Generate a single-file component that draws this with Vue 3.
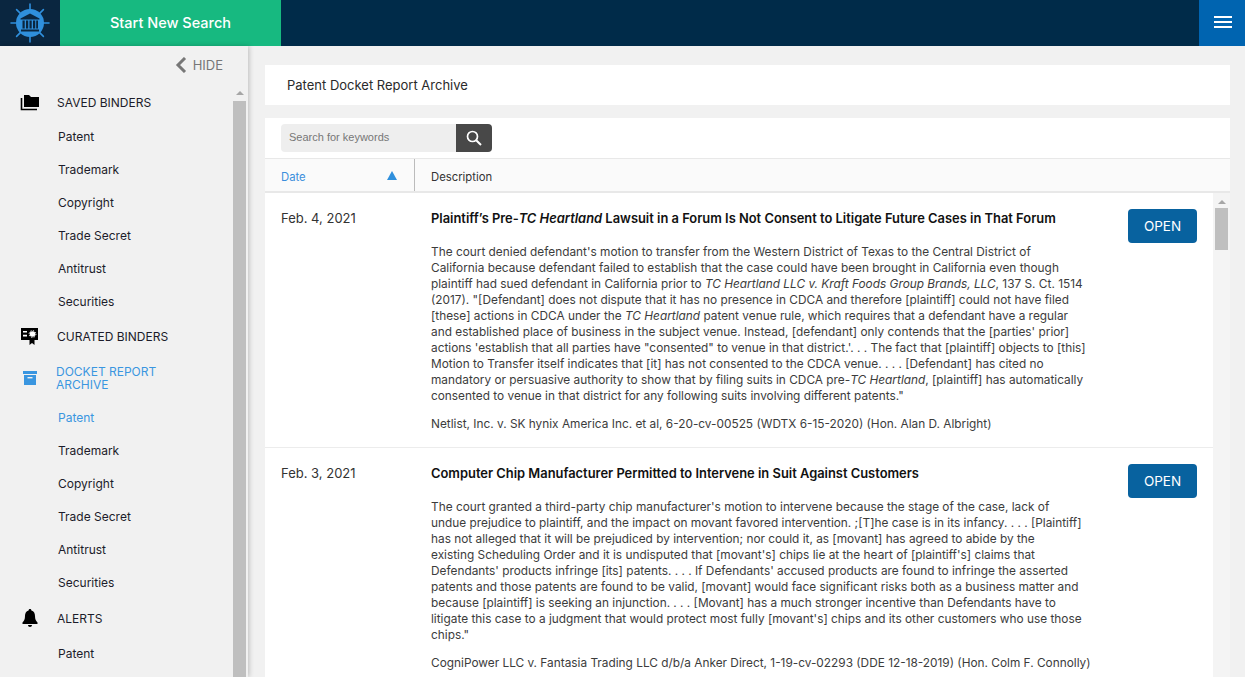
<template>
  <div class="app">
    <header class="topbar">
      <div class="logo">
        <svg width="40" height="40" viewBox="0 0 40 40">
          <g stroke="#2f8fdc" stroke-width="1.6" stroke-linecap="round">
            <path d="M20 1v38M1 20h38M6.6 6.6l26.8 26.800M33.400 6.600L6.600 33.400" />
          </g>
          <circle cx="20" cy="20" r="14" fill="#2f8fdc" />
          <path d="M20 10.500L29.500 15.500V16.500H10.500V15.500Z" fill="#0a2640" />
          <path d="M12.500 17.500h2.200v8h-2.200zM16 17.500h2.200v8H16zM19.500 17.500h2.200v8h-2.200zM23 17.500h2.200v8H23zM26.200 17.500h1.800v8h-1.800zM11 26.500h18v2H11z" fill="#0a2640" />
        </svg>
      </div>
      <button class="new-search">Start New Search</button>
      <div class="spacer"></div>
      <button class="menu-btn" aria-label="Menu"><span></span><span></span><span></span></button>
    </header>

    <div class="body-row">
      <aside class="sidebar">
        <div class="hide-row">
          <svg width="12" height="16" viewBox="0 0 12 16"><path d="M10 1L3 8l7 7" fill="none" stroke="#777" stroke-width="3" /></svg>
          <span>HIDE</span>
        </div>
        <div class="nav-wrap">
          <nav class="nav">
            <template v-for="group in groups" :key="group.name">
              <div class="group" :class="group.kind">
                <span class="group-icon">
                  <svg v-if="group.icon === 'folder'" width="20" height="17" viewBox="0 0 20 17">
                    <path d="M4 1h5l2 2h8v10H4z" fill="#000" />
                    <path d="M1.500 4v11.500H17" fill="none" stroke="#000" stroke-width="1.600" />
                  </svg>
                  <svg v-else-if="group.icon === 'cert'" width="19" height="19" viewBox="0 0 19 19">
                    <path d="M1 1h17v12h-3.500v5l-2.500-2-2.500 2v-5H1z" fill="#000" />
                    <path d="M3 4h4v1.600H3zM3 7.800h4v1.600H3z" fill="#fff" />
                    <circle cx="12.500" cy="7" r="2.800" fill="#fff" />
                    <circle cx="12.500" cy="7" r="3.400" fill="none" stroke="#fff" stroke-width="1" stroke-dasharray="1.300 1.370" />
                  </svg>
                  <svg v-else-if="group.icon === 'archive'" width="14" height="14" viewBox="0 0 14 14">
                    <path d="M0 0h14v3H0z" fill="#3a96e0" />
                    <path d="M1 4h12v10H1z" fill="#3a96e0" />
                    <path d="M4.500 6h5v1.400h-5z" fill="#f1f1f1" />
                  </svg>
                  <svg v-else width="16" height="18" viewBox="0 0 16 18">
                    <path d="M8 0c1 0 1.400.7 1.400 1.500C12 2.200 13 4.500 13 7c0 3.500 1 5 2.500 6.500V15H.5v-1.500C2 12 3 10.500 3 7c0-2.500 1-4.800 3.600-5.500C6.600.7 7 0 8 0z" fill="#000" />
                    <path d="M6 16h4c0 1-.9 2-2 2s-2-1-2-2z" fill="#000" />
                  </svg>
                </span>
                <span class="group-name" v-html="group.name"></span>
              </div>
              <a
                v-for="(item, i) in group.items"
                :key="item"
                class="nav-link"
                :class="{ active: group.kind === 'archive' && i === 0 }"
              >{{ item }}</a>
            </template>
          </nav>
          <div class="side-scroll">
            <i class="arrow"></i>
            <div class="thumb"></div>
          </div>
        </div>
      </aside>

      <main class="main">
        <div class="title-card">Patent Docket Report Archive</div>
        <section class="panel">
          <div class="search-row">
            <div class="search">
              <span class="search-input">Search for keywords</span>
              <button class="search-btn" aria-label="Search">
                <svg width="16" height="16" viewBox="0 0 16 16">
                  <circle cx="6.500" cy="6.500" r="5" fill="none" stroke="#fff" stroke-width="1.700" />
                  <path d="M10.200 10.200L15 15" stroke="#fff" stroke-width="2" />
                </svg>
              </button>
            </div>
          </div>
          <div class="table-head">
            <div class="th-date">Date <i class="sort"></i></div>
            <div class="th-desc">Description</div>
          </div>
          <div class="table-body">
            <div class="rows">
              <article v-for="row in rows" :key="row.date" class="row">
                <div class="date">{{ row.date }}</div>
                <div class="content">
                  <h3 class="row-title" v-html="row.title"></h3>
                  <p class="summary" v-html="row.summary"></p>
                  <p class="cite">{{ row.cite }}</p>
                </div>
                <button class="open">OPEN</button>
              </article>
            </div>
            <div class="main-scroll">
              <i class="arrow"></i>
              <div class="thumb"></div>
            </div>
          </div>
        </section>
      </main>
    </div>
  </div>
</template>

<script setup>
const kinds = ['Patent', 'Trademark', 'Copyright', 'Trade Secret', 'Antitrust', 'Securities']

const groups = [
  { name: 'SAVED BINDERS', icon: 'folder', items: kinds },
  { name: 'CURATED BINDERS', icon: 'cert', items: [], kind: 'curated' },
  { name: 'DOCKET REPORT<br>ARCHIVE', icon: 'archive', items: kinds, kind: 'archive' },
  { name: 'ALERTS', icon: 'bell', items: ['Patent'], kind: 'alerts' },
]

const rows = [
  {
    date: 'Feb. 4, 2021',
    title: 'Plaintiff’s Pre-<em>TC Heartland</em> Lawsuit in a Forum Is Not Consent to Litigate Future Cases in That Forum',
    summary: `The court denied defendant's motion to transfer from the Western District of Texas to the Central District of<br>
California because defendant failed to establish that the case could have been brought in California even though<br>
plaintiff had sued defendant in California prior to <em>TC Heartland LLC v. Kraft Foods Group Brands, LLC</em>, 137 S. Ct. 1514<br>
(2017). "[Defendant] does not dispute that it has no presence in CDCA and therefore [plaintiff] could not have filed<br>
[these] actions in CDCA under the <em>TC Heartland</em> patent venue rule, which requires that a defendant have a regular<br>
and established place of business in the subject venue. Instead, [defendant] only contends that the [parties' prior]<br>
actions 'establish that all parties have "consented" to venue in that district.'. . . The fact that [plaintiff] objects to [this]<br>
Motion to Transfer itself indicates that [it] has not consented to the CDCA venue. . . . [Defendant] has cited no<br>
mandatory or persuasive authority to show that by filing suits in CDCA pre-<em>TC Heartland</em>, [plaintiff] has automatically<br>
consented to venue in that district for any following suits involving different patents."`,
    cite: 'Netlist, Inc. v. SK hynix America Inc. et al, 6-20-cv-00525 (WDTX 6-15-2020) (Hon. Alan D. Albright)',
  },
  {
    date: 'Feb. 3, 2021',
    title: 'Computer Chip Manufacturer Permitted to Intervene in Suit Against Customers',
    summary: `The court granted a third-party chip manufacturer's motion to intervene because the stage of the case, lack of<br>
undue prejudice to plaintiff, and the impact on movant favored intervention. ;[T]he case is in its infancy. . . . [Plaintiff]<br>
has not alleged that it will be prejudiced by intervention; nor could it, as [movant] has agreed to abide by the<br>
existing Scheduling Order and it is undisputed that [movant's] chips lie at the heart of [plaintiff's] claims that<br>
Defendants' products infringe [its] patents. . . . If Defendants' accused products are found to infringe the asserted<br>
patents and those patents are found to be valid, [movant] would face significant risks both as a business matter and<br>
because [plaintiff] is seeking an injunction. . . . [Movant] has a much stronger incentive than Defendants have to<br>
litigate this case to a judgment that would protect most fully [movant's] chips and its other customers who use those<br>
chips."`,
    cite: 'CogniPower LLC v. Fantasia Trading LLC d/b/a Anker Direct, 1-19-cv-02293 (DDE 12-18-2019) (Hon. Colm F. Connolly)',
  },
]
</script>

<style>
html,
body {
  margin: 0;
  height: 100%;
  overflow: hidden;
}
</style>

<style scoped>
.app {
  width: 1245px;
  height: 677px;
  display: flex;
  flex-direction: column;
  overflow: hidden;
  background: #f1f1f1;
  font-family: Inter, "Liberation Sans", sans-serif;
  color: #222;
}

.topbar {
  height: 46px;
  flex: none;
  display: flex;
  background: #002b49;
}

.logo {
  width: 60px;
  background: #0a2640;
  display: flex;
  align-items: center;
  justify-content: center;
}

.new-search {
  width: 221px;
  border: 0;
  padding: 0 0 2px;
  background: #17b980;
  color: #fff;
  font: 500 14.500px Inter, sans-serif;
}

.spacer {
  flex: 1;
}

.menu-btn {
  width: 46px;
  border: 0;
  background: #0064b0;
  display: flex;
  flex-direction: column;
  align-items: center;
  justify-content: center;
  gap: 3px;
  padding: 0 0 2px 2px;
}

.menu-btn span {
  width: 18px;
  height: 2px;
  background: #fff;
}

.body-row {
  flex: 1;
  min-height: 0;
  display: flex;
}

.sidebar {
  width: 248px;
  flex: none;
  display: flex;
  flex-direction: column;
  background: #f1f1f1;
  box-shadow: 1px 0 5px rgba(0, 0, 0, 0.22);
}

.hide-row {
  height: 40px;
  flex: none;
  display: flex;
  align-items: center;
  justify-content: flex-end;
  gap: 6px;
  padding-right: 25px;
  padding-bottom: 2px;
  box-sizing: border-box;
  font-size: 13px;
  color: #777;
}

.nav-wrap {
  flex: 1;
  min-height: 0;
  display: flex;
}

.nav {
  flex: 1;
  overflow: hidden;
}

.group {
  height: 33px;
  box-sizing: border-box;
  display: flex;
  align-items: center;
  font-size: 12px;
  color: #1c1c2a;
}

.group.curated {
  height: 36px;
  padding-top: 2px;
}

.group.archive {
  height: 47px;
  padding-top: 2px;
  color: #3a96e0;
  line-height: 13px;
}

.group.alerts {
  height: 38px;
  padding-top: 2px;
}

.group-icon {
  width: 57px;
  flex: none;
  display: flex;
  justify-content: center;
  box-sizing: border-box;
  padding-left: 2px;
}

.group.archive .group-name {
  margin-left: -1px;
}

.nav-link {
  display: flex;
  align-items: center;
  box-sizing: border-box;
  height: 33px;
  padding: 2px 0 0 58px;
  font-size: 12px;
  color: #1c1c2a;
}

.nav-link.active {
  color: #3a96e0;
}

.side-scroll {
  width: 13px;
  flex: none;
  margin-right: 2px;
  display: flex;
  flex-direction: column;
  align-items: center;
}

.side-scroll .arrow,
.main-scroll .arrow {
  display: block;
  width: 0;
  height: 0;
  border-left: 4px solid transparent;
  border-right: 4px solid transparent;
  border-bottom: 4px solid #a6a6a6;
}

.side-scroll .arrow {
  margin-top: 5px;
  margin-bottom: 6px;
}

.side-scroll .thumb {
  width: 13px;
  flex: 1;
  background: #bfbfbf;
}

.main {
  flex: 1;
  min-width: 0;
  display: flex;
  flex-direction: column;
  padding: 19px 15px 0 17px;
}

.title-card {
  height: 40px;
  flex: none;
  display: flex;
  align-items: center;
  padding-left: 22px;
  background: #fff;
  font-size: 13px;
  color: #2a2a2a;
}

.panel {
  flex: 1;
  min-height: 0;
  margin-top: 13px;
  display: flex;
  flex-direction: column;
  background: #fff;
}

.search-row {
  height: 40px;
  flex: none;
  box-sizing: border-box;
  padding: 6px 0 0 16px;
}

.search {
  display: flex;
  width: 211px;
  height: 28px;
  border-radius: 4px;
  overflow: hidden;
}

.search-input {
  flex: 1;
  display: flex;
  align-items: center;
  padding: 0 0 2px 8px;
  background: #eee;
  font: 11px "Liberation Sans", sans-serif;
  color: #777;
}

.search-btn {
  width: 36px;
  border: 0;
  padding: 0;
  background: #484848;
  display: flex;
  align-items: center;
  justify-content: center;
}

.table-head {
  height: 35px;
  flex: none;
  box-sizing: border-box;
  display: flex;
  border-top: 1px solid #e8e8e8;
  border-bottom: 2px solid #e8e8e8;
  background: #fafafa;
  font-size: 11.300px;
}

.th-date {
  width: 150px;
  box-sizing: border-box;
  padding: 3px 16px 0;
  display: flex;
  align-items: center;
  justify-content: space-between;
  border-right: 1px solid #bbb;
  color: #3a8fdc;
}

.sort {
  width: 0;
  height: 0;
  margin-bottom: 3px;
  margin-right: 1px;
  border-left: 5px solid transparent;
  border-right: 5px solid transparent;
  border-bottom: 9px solid #2f8fdc;
}

.th-desc {
  padding: 3px 0 0 16px;
  display: flex;
  align-items: center;
  color: #333;
}

.table-body {
  flex: 1;
  min-height: 0;
  display: flex;
}

.rows {
  flex: 1;
  min-width: 0;
  overflow: hidden;
}

.row {
  display: flex;
  align-items: flex-start;
  box-sizing: border-box;
  border-bottom: 1px solid #ececec;
  padding: 16px 16px 0 16px;
  height: 255px;
}

.date {
  width: 150px;
  flex: none;
  font-size: 13px;
  line-height: 18px;
  color: #333;
}

.content {
  flex: 1;
  min-width: 0;
  white-space: nowrap;
}

.row-title {
  margin: 0 0 16px;
  padding-top: 1px;
  font-size: 12.900px;
  line-height: 18px;
  font-weight: 600;
  color: #111;
}

.summary,
.cite {
  margin: 0;
  font-size: 11.850px;
  line-height: 16px;
  color: #3c3c3c;
}

.cite {
  margin-top: 12px;
}

.open {
  width: 69px;
  height: 34px;
  flex: none;
  border: 0;
  border-radius: 4px;
  background: #08629f;
  color: #fff;
  font: 13.500px Inter, sans-serif;
}

.main-scroll {
  width: 17px;
  flex: none;
  background: #f4f4f4;
  display: flex;
  flex-direction: column;
  align-items: center;
}

.main-scroll .arrow {
  margin-top: 7px;
  margin-bottom: 4px;
}

.main-scroll .thumb {
  width: 13px;
  height: 42px;
  background: #bfbfbf;
}
</style>
